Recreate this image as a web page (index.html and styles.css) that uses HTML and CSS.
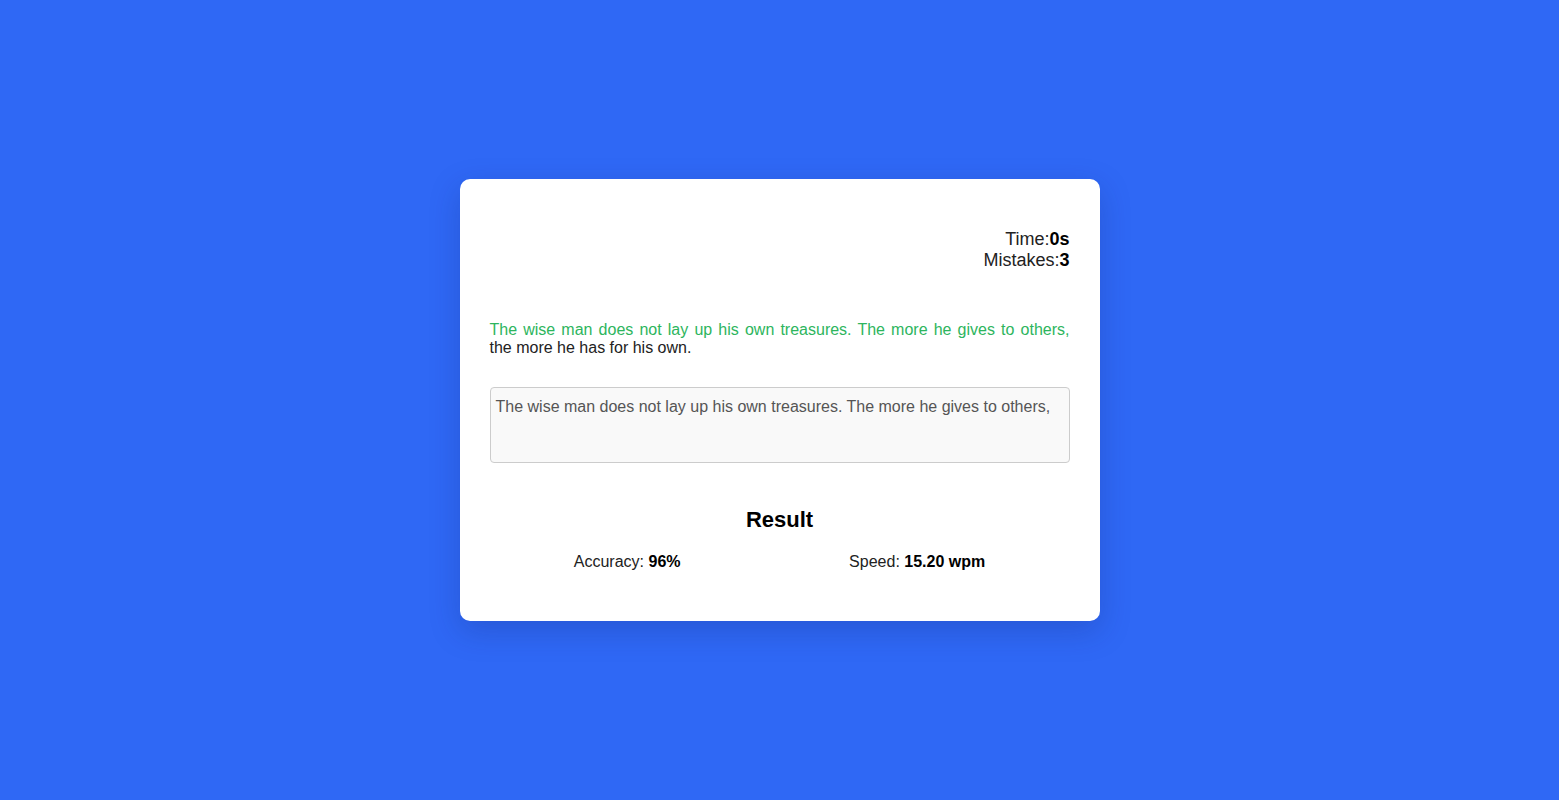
FILE: index.html
```html
<!DOCTYPE html>
<html lang="en">
<head>
<meta charset="utf-8">
<title>Typing Test</title>
<link rel="stylesheet" href="styles.css">
</head>
<body>
<main class="page">
  <section class="card">
    <div class="stats">
      <div class="stat">Time:<b>0s</b></div>
      <div class="stat">Mistakes:<b>3</b></div>
    </div>
    <p class="quote"><span class="done">The wise man does not lay up his own treasures. The more he gives to others,</span> the more he has for his own.</p>
    <textarea class="input">The wise man does not lay up his own treasures. The more he gives to others,</textarea>
    <div class="result">
      <h2 class="result-title">Result</h2>
      <div class="result-row">
        <div class="metric">Accuracy: <b>96%</b></div>
        <div class="metric">Speed: <b>15.20 wpm</b></div>
      </div>
    </div>
  </section>
</main>
</body>
</html>
```
FILE: styles.css
```css
* { box-sizing: border-box; }
html, body { margin: 0; height: 100%; }
body {
  background: #2f68f5;
  font-family: "Liberation Sans", Arial, sans-serif;
  color: #111;
}
.page {
  height: 800px;
  display: flex;
  align-items: center;
  justify-content: center;
}
.card {
  width: 640px;
  height: 442px;
  background: #fff;
  border-radius: 10px;
  padding: 50px 30px 30px;
  box-shadow: 0 10px 30px rgba(20, 40, 120, 0.25);
  display: flex;
  flex-direction: column;
}
.stats {
  text-align: right;
  font-size: 18px;
  line-height: 21px;
  color: #222;
}
.stats b { color: #000; }
.quote {
  margin: 50px 0 0;
  font-size: 16px;
  line-height: 18.4px;
  text-align: justify;
  color: #222;
}
.done { color: #2db55d; }
.input {
  display: block;
  margin-top: 29px;
  width: 100%;
  height: 76px;
  border: 1px solid #ccc;
  border-radius: 4px;
  background: #f9f9f9;
  padding: 10px 5px;
  font-family: "Liberation Sans", Arial, sans-serif;
  font-size: 16px;
  line-height: 18.4px;
  color: #555;
  resize: none;
  overflow: hidden;
}
.result { margin-top: 44px; }
.result-title {
  margin: 0;
  text-align: center;
  font-size: 22px;
  line-height: 25px;
  font-weight: bold;
  color: #000;
}
.result-row {
  margin-top: 21px;
  display: flex;
  justify-content: space-around;
  font-size: 16px;
  line-height: 18px;
  color: #222;
}
.result-row b { color: #000; }
```
